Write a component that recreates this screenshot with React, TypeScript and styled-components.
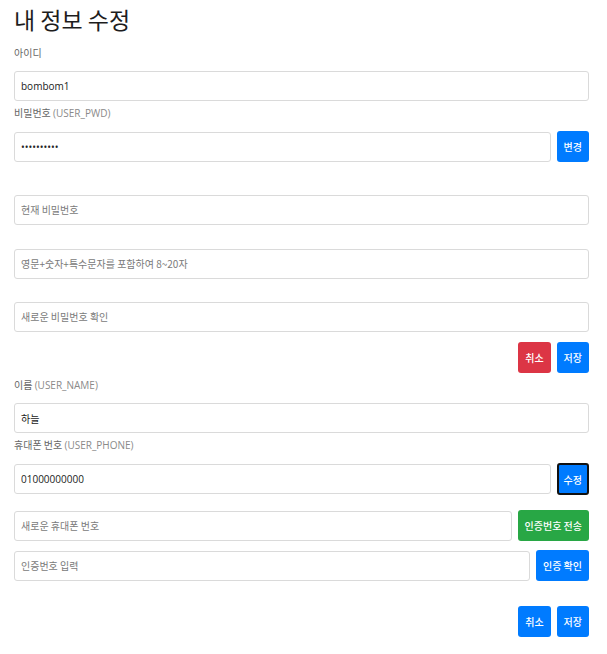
import styled, { createGlobalStyle } from "styled-components";

const GlobalStyle = createGlobalStyle`
  html, body {
    margin: 0;
    padding: 0;
    background: #fff;
  }
  body {
    font-family: "Open Sans", "Noto Sans CJK KR", sans-serif;
    color: #222;
  }
  * {
    box-sizing: border-box;
  }
`;

const Page = styled.div`
  width: 607px;
  padding: 0 18px 20px 14px;
`;

const Title = styled.h2`
  margin: 0;
  padding-top: 5px;
  font-family: "Noto Sans CJK KR", sans-serif;
  font-size: 23px;
  line-height: 29px;
  font-weight: 400;
  color: #1d1d1d;
`;

const Label = styled.div<{ $top?: number }>`
  margin: ${({ $top }) => ($top ?? 3)}px 0 9px;
  font-family: "Noto Sans CJK KR", sans-serif;
  font-size: 10px;
  line-height: 18px;
  color: #666;

  span {
    font-family: "Open Sans", sans-serif;
    color: #8a8a8a;
  }
`;

const Input = styled.input<{ $top?: number }>`
  display: block;
  width: 100%;
  min-width: 0;
  flex: 1;
  height: 30px;
  margin-top: ${({ $top }) => $top ?? 0}px;
  padding: 0 6px;
  border: 1px solid #dadada;
  border-radius: 3px;
  background: #fff;
  font-family: "Open Sans", "Noto Sans CJK KR", sans-serif;
  font-size: 10px;
  color: #222;
  outline: none;

  &::placeholder {
    font-family: "Noto Sans CJK KR", sans-serif;
    color: #7a7a7a;
  }
`;

const Row = styled.div<{ $top?: number }>`
  display: flex;
  align-items: center;
  gap: 6px;
  margin-top: ${({ $top }) => $top ?? 0}px;
`;

const Actions = styled.div<{ $top?: number }>`
  display: flex;
  justify-content: flex-end;
  gap: 6px;
  margin-top: ${({ $top }) => $top ?? 0}px;
`;

const palette = {
  blue: "#007bff",
  red: "#dc3545",
  green: "#28a745",
};

const Button = styled.button<{ $tone?: keyof typeof palette; $focused?: boolean }>`
  flex: none;
  height: ${({ $focused }) => ($focused ? 32 : 31)}px;
  padding: 0 ${({ $focused }) => ($focused ? 5 : 7)}px;
  border: ${({ $focused }) => ($focused ? "2px solid #111" : "none")};
  border-radius: 3px;
  background: ${({ $tone }) => palette[$tone ?? "blue"]};
  color: #fff;
  font-family: "Noto Sans CJK KR", sans-serif;
  font-size: 10px;
  font-weight: 500;
  white-space: nowrap;
  cursor: pointer;
`;

export default function App() {
  return (
    <>
      <GlobalStyle />
      <Page>
        <Title>내 정보 수정</Title>

        <Label $top={10}>아이디</Label>
        <Input readOnly value="bombom1" />

        <Label>
          비밀번호 <span>(USER_PWD)</span>
        </Label>
        <Row>
          <Input type="password" readOnly value="1234567890" />
          <Button>변경</Button>
        </Row>

        <Input $top={33} readOnly placeholder="현재 비밀번호" />
        <Input $top={24} readOnly placeholder="영문+숫자+특수문자를 포함하여 8~20자" />
        <Input $top={23} readOnly placeholder="새로운 비밀번호 확인" />
        <Actions $top={10}>
          <Button $tone="red">취소</Button>
          <Button>저장</Button>
        </Actions>

        <Label $top={3}>
          이름 <span>(USER_NAME)</span>
        </Label>
        <Input readOnly value="하늘" />

        <Label $top={3}>
          휴대폰 번호 <span>(USER_PHONE)</span>
        </Label>
        <Row>
          <Input readOnly value="01000000000" />
          <Button $focused>수정</Button>
        </Row>

        <Row $top={15}>
          <Input readOnly placeholder="새로운 휴대폰 번호" />
          <Button $tone="green">인증번호 전송</Button>
        </Row>
        <Row $top={9}>
          <Input readOnly placeholder="인증번호 입력" />
          <Button>인증 확인</Button>
        </Row>

        <Actions $top={25}>
          <Button>취소</Button>
          <Button>저장</Button>
        </Actions>
      </Page>
    </>
  );
}
